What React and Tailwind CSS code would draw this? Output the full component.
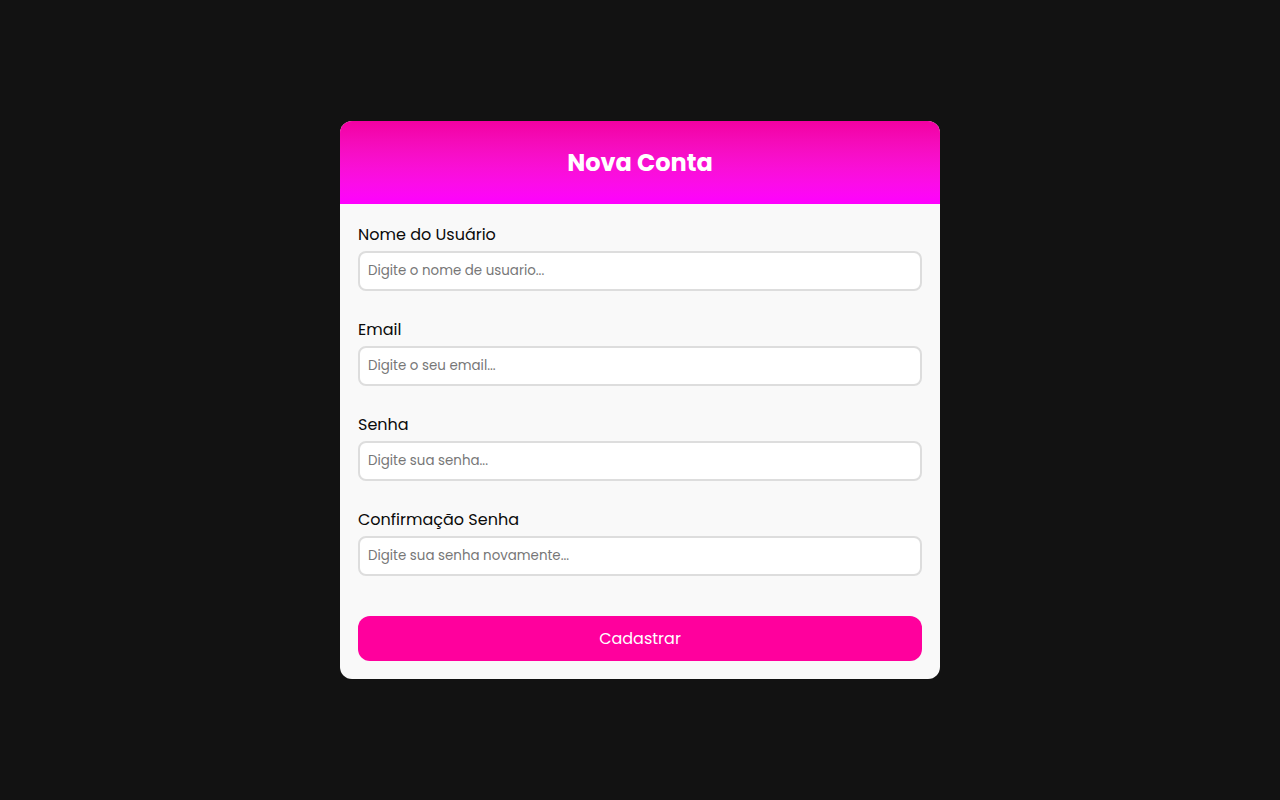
import React, { useState } from "react";

const fields = [
  { label: "Nome do Usuário", placeholder: "Digite o nome de usuario...", type: "text" },
  { label: "Email", placeholder: "Digite o seu email...", type: "email" },
  { label: "Senha", placeholder: "Digite sua senha...", type: "password" },
  { label: "Confirmação Senha", placeholder: "Digite sua senha novamente...", type: "password" },
];

const App = () => {
  const [values, setValues] = useState({});

  return (
    <div className="min-h-screen w-full bg-[#121212] flex items-center justify-center font-['Poppins','Open_Sans',sans-serif]">
      <div className="w-[600px] rounded-xl overflow-hidden bg-[#f9f9f9]">
        <div className="h-[83px] flex items-center justify-center bg-gradient-to-b from-[#f200a2] to-[#ff00ff]">
          <h1 className="text-white text-[24px] font-bold">Nova Conta</h1>
        </div>
        <form className="px-[18px] pt-[18px] pb-[18px]" onSubmit={(e) => e.preventDefault()}>
          {fields.map((f, i) => (
            <div key={i} className="mb-[26px]">
              <label className="block pt-px text-[16px] leading-6 text-[#0a0a0a] mb-[4px]">{f.label}</label>
              <input
                type={f.type}
                value={values[i] || ""}
                onChange={(e) => setValues({ ...values, [i]: e.target.value })}
                placeholder={f.placeholder}
                className="w-full h-10 px-[8px] text-[13.4px] bg-white border-2 border-[#dddddd] rounded-lg outline-none placeholder:text-[#777]"
              />
            </div>
          ))}
          <button
            type="submit"
            className="mt-[14px] w-full h-[45px] rounded-xl bg-[#ff009d] text-white text-[16px]"
          >
            Cadastrar
          </button>
        </form>
      </div>
    </div>
  );
};

export default App;
